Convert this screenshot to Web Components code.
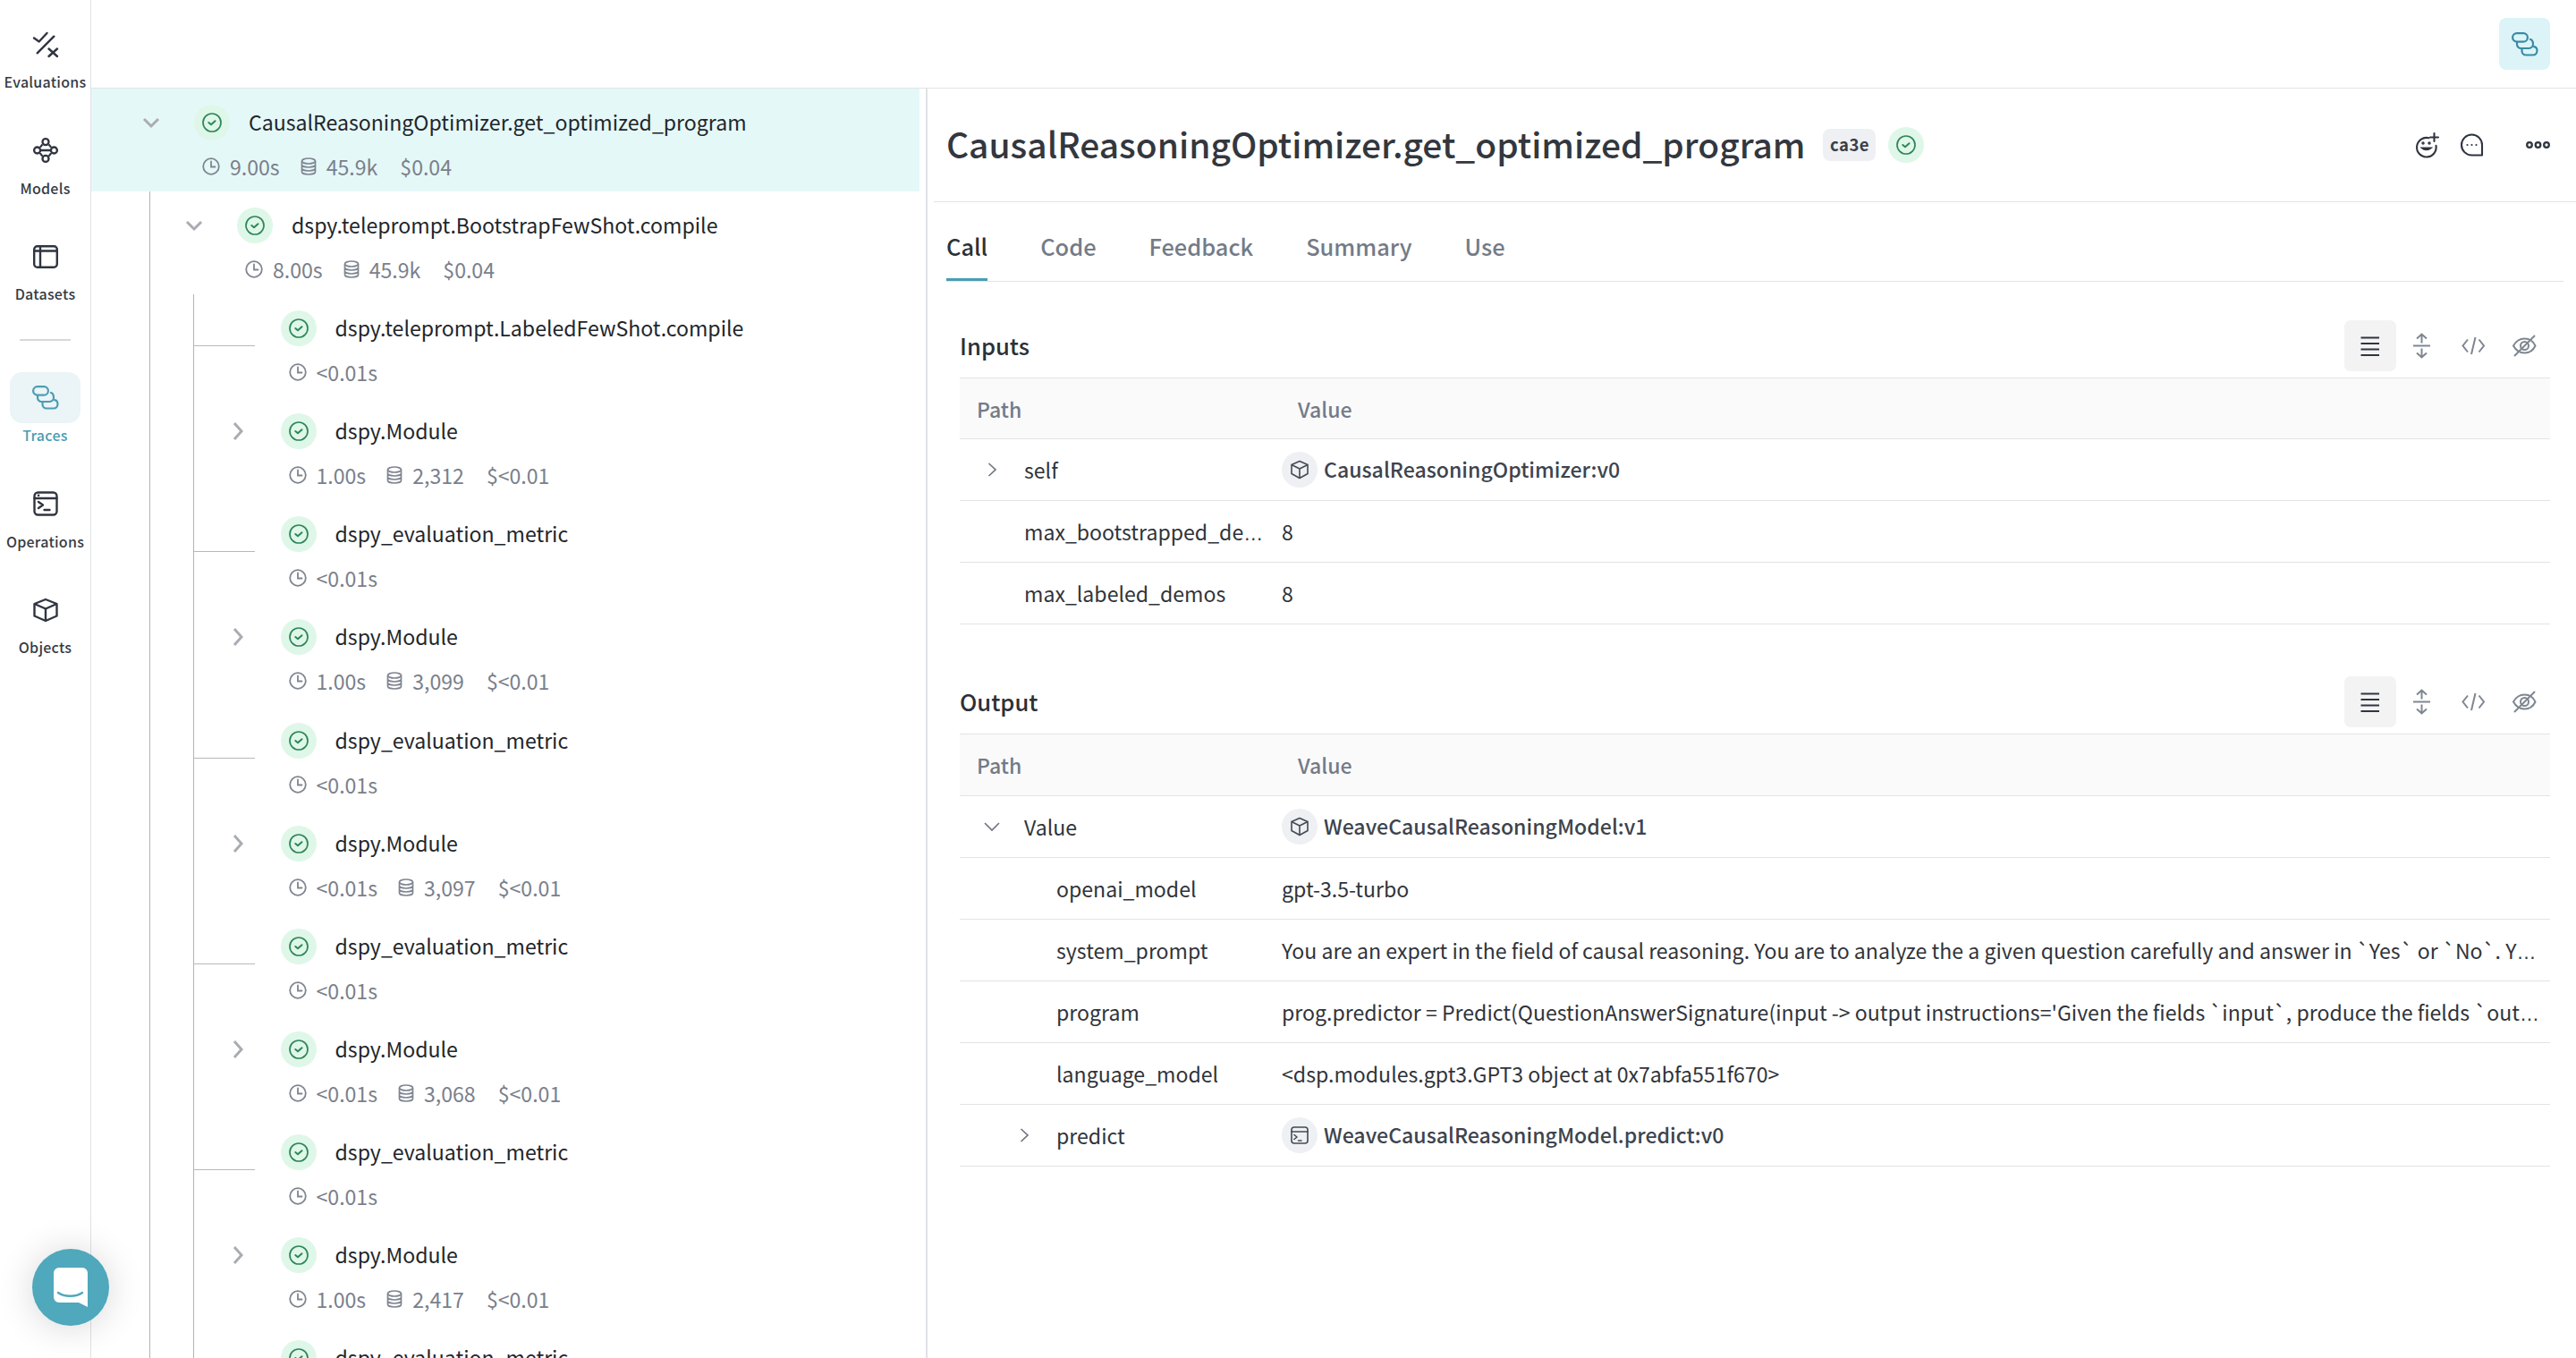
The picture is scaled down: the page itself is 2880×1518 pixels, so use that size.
<!DOCTYPE html>
<html lang="en"><head><meta charset="utf-8"><title>Traces</title>
<style>
html,body{margin:0;padding:0;height:1518px;overflow:hidden;background:#fff;font-family:"Noto Sans CJK SC","Source Sans Pro","Noto Sans",sans-serif;color:#1f2328}
</style></head><body>
<wv-app></wv-app>
<script>
const ICONS={
 evals:'<g fill="none" stroke-linecap="round" stroke-linejoin="round" stroke-width="2.4"><path d="M1 6.5 6.7 10.5 15.5 1"/><path d="M4.7 23.3 23.3 4.7"/><path d="M17.5 18.5 27 27M27 18.5 17.5 27"/></g>',
 models:'<g fill="none" stroke-width="2.3"><circle cx="14" cy="4.6" r="3.5"/><circle cx="14" cy="23.4" r="3.5"/><circle cx="4.6" cy="14" r="3.5"/><circle cx="23.4" cy="14" r="3.5"/><path d="M8 14h12M10.5 7.5C9 9 8 10 8 11M17.5 7.5C19 9 20 10 20 11M10.5 20.5C9 19 8 18 8 17M17.5 20.5C19 19 20 18 20 17"/></g>',
 datasets:'<g fill="none" stroke-width="2.4"><rect x="1.2" y="2.2" width="25.6" height="23.6" rx="3.5"/><path d="M1.2 7.5h25.6M8 2.2v23.6"/></g>',
 traces:'<g fill="none" stroke-width="2.2" stroke-linecap="round"><rect x="1.1" y="1.1" width="16.8" height="9.6" rx="4.8"/><path d="M6 11.5v2a4.500 4.500 0 0 0 4.500 4.500h9a4.700 4.700 0 0 0 4.500-4.700c0-2.500-1.500-4.800-3-5.300"/><path d="M11.500 18.500v2.500a4.500 4.500 0 0 0 4.500 4.500h8a4.700 4.700 0 0 0 4.500-4.500c0-2.500-1.500-4.500-3.500-4.800"/></g>',
 ops:'<g fill="none" stroke-width="2.4" stroke-linecap="round" stroke-linejoin="round"><rect x="1.5" y="1.500" width="25" height="25" rx="4"/><path d="M1.5 8h25"/><path d="M6 12l5 3.500-5 3.500M12.500 21h6"/><path d="M6 4.800h.2"/></g>',
 cube:'<g fill="none" stroke-width="2.400" stroke-linejoin="round"><path d="M14 2 26.500 7v13.500L14 26 1.500 20.500V7Z"/><path d="M1.500 7 14 12.500 26.500 7M14 12.500V26"/></g>',
 check:'<g fill="none"><circle cx="11" cy="11" r="10" stroke-width="1.700"/><path d="M7.300 11 10 13.200 14.500 9.200" stroke-width="2" stroke-linecap="round" stroke-linejoin="round"/></g>',
 clock:'<g fill="none" stroke-width="1.800" stroke-linecap="round"><circle cx="10" cy="10" r="8.800"/><path d="M10 4.500V10.500H14.500"/></g>',
 db:'<g fill="none" stroke-width="1.700"><ellipse cx="9" cy="4" rx="7.500" ry="3"/><path d="M1.500 4v12c0 1.700 3.400 3 7.500 3s7.500-1.300 7.500-3V4M1.500 8c0 1.700 3.400 3 7.500 3s7.500-1.300 7.500-3M1.500 12c0 1.700 3.400 3 7.500 3s7.500-1.300 7.500-3"/></g>',
 down:'<path d="M2 2 10 10 18 2" fill="none" stroke-width="3"/>',
 right:'<path d="M2 1 10 10 2 19" fill="none" stroke-width="3"/>',
 thinright:'<path d="M1.500 1 9 8 1.500 15" fill="none" stroke-width="1.700"/>',
 thindown:'<path d="M1 1 9 9 17 1" fill="none" stroke-width="1.700"/>',
 smile:'<g fill="none" stroke-width="2.100" stroke-linecap="round"><path d="M15.500 5.200A10.800 10.800 0 1 0 23.500 13.800"/><path d="M21.500 0v9M17 4.500h9"/><path d="M8 16.500c2.500 2.300 7 2.300 9.500 0Z" fill="#2f3540"/><circle cx="9" cy="11" r=".7" fill="#2f3540"/><circle cx="16" cy="11" r=".7" fill="#2f3540"/></g>',
 comment:'<g fill="none" stroke-width="2.100" stroke-linejoin="round"><path d="M25 13A11.500 11.500 0 1 0 13.500 24.500H25Z"/></g><circle cx="8.500" cy="13" r="1.100" stroke="none"/><circle cx="13.500" cy="13" r="1.100" stroke="none"/><circle cx="18.500" cy="13" r="1.100" stroke="none"/>',
 dots:'<g fill="none" stroke-width="2.300"><circle cx="4" cy="4" r="2.800"/><circle cx="13.500" cy="4" r="2.800"/><circle cx="23" cy="4" r="2.800"/></g>',
 lines:'<path d="M.5 1.500h20.500M.5 8h20.500M.5 14.500h20.500M.5 21h20.500" fill="none" stroke-width="2.200"/>',
 expand:'<g fill="none" stroke-width="2"><path d="M0 14.500h19"/><path d="M9.500 11.500V1.500M4 6.500 9.500 1.500 15 6.500M9.500 17.500V27.500M4 22.500 9.500 27.500 15 22.500"/></g>',
 code:'<path d="M7 3.500 1.500 10.500 7 17.500M19.500 3.500 25 10.500 19.500 17.500M15.500 1 11 20" fill="none" stroke-width="2"/>',
 eyeoff:'<g fill="none" stroke-width="2"><path d="M1 12.500C4 7 8.500 4.500 13.500 4.500s9.500 2.500 12 8c-2.500 5.500-7 8-12 8S4 18 1 12.500Z"/><circle cx="13.500" cy="12.500" r="4.500"/><path d="M2 24 25 1"/></g>',
 box:'<g fill="none" stroke-width="1.600" stroke-linejoin="round"><path d="M11 1.500 20 5.500v10L11 20.500 2 15.500v-10Z"/><path d="M2 5.500 11 10l9-4.500M11 10v10.500"/></g>',
 term:'<g fill="none" stroke-width="1.600" stroke-linecap="round" stroke-linejoin="round"><rect x="2" y="2" width="18" height="18" rx="3"/><path d="M2 7h18M5 10.500l3 2.500-3 2.500M9.500 17h3.500"/></g>'
};
const VB={evals:[28,28],models:[28,28],datasets:[28,28],traces:[29,26],ops:[28,28],cube:[28,28],check:[22,22],clock:[20,20],db:[18,20],down:[20,12],right:[12,20],thinright:[10,16],thindown:[18,10],smile:[26,26],comment:[26,26],dots:[27,8],lines:[21,22],expand:[19,29],code:[26,21],eyeoff:[27,25],box:[22,22],term:[22,22]};
class WvIcon extends HTMLElement{
 connectedCallback(){
  if(this.shadowRoot)return;
  const n=this.getAttribute('name'),[w,h]=VB[n],c=this.getAttribute('color')||'currentColor';
  this.attachShadow({mode:'open'}).innerHTML=`<style>:host{display:inline-flex;flex:none;line-height:0}svg{display:block;overflow:visible}</style><svg width="${w}" height="${h}" viewBox="0 0 ${w} ${h}" stroke="${c}" fill="${c}">${ICONS[n]}</svg>`;
 }
}
customElements.define('wv-icon',WvIcon);

class WvNavItem extends HTMLElement{
 constructor(){super();this.attachShadow({mode:'open'}).innerHTML=`<style>
 :host{display:flex;flex-direction:column;align-items:center;height:118.67px;color:#363b45}
 .pill{width:79px;height:57px;border-radius:14px;display:flex;align-items:center;justify-content:center;box-sizing:border-box}
 :host([active]) .pill{background:#ebf4f6}
 :host([active]){color:#4a9db3}
 .l{font-size:16px;line-height:24px;font-weight:500;margin-top:1px;letter-spacing:.25px;white-space:nowrap}
 </style><div class="pill"><slot name="icon"></slot></div><div class="l"><slot></slot></div>`;}
}
customElements.define('wv-nav-item',WvNavItem);

class WvSidebar extends HTMLElement{
 constructor(){super();this.attachShadow({mode:'open'}).innerHTML=`<style>
 :host{display:block;width:101px;flex:none;border-right:1px solid #dfe2e6;padding-top:21px;box-sizing:content-box;height:1497px;background:#fff}
 hr{border:0;height:2px;background:#d6d8db;width:57px;margin:2px auto 35px}
 </style>
 <wv-nav-item><wv-icon slot="icon" name="evals" color="#2f3540"></wv-icon>Evaluations</wv-nav-item>
 <wv-nav-item><wv-icon slot="icon" name="models" color="#2f3540"></wv-icon>Models</wv-nav-item>
 <wv-nav-item><wv-icon slot="icon" name="datasets" color="#2f3540"></wv-icon>Datasets</wv-nav-item>
 <hr>
 <wv-nav-item active><wv-icon slot="icon" name="traces" color="#4a9db3"></wv-icon>Traces</wv-nav-item>
 <wv-nav-item><wv-icon slot="icon" name="ops" color="#2f3540"></wv-icon>Operations</wv-nav-item>
 <wv-nav-item><wv-icon slot="icon" name="cube" color="#2f3540"></wv-icon>Objects</wv-nav-item>`;}
}
customElements.define('wv-sidebar',WvSidebar);

class WvTopbar extends HTMLElement{
 constructor(){super();this.attachShadow({mode:'open'}).innerHTML=`<style>
 :host{display:flex;justify-content:flex-end;align-items:center;height:98px;padding-right:29px;border-bottom:1px solid #e2e3e6;flex:none}
 .b{width:57px;height:58px;border-radius:8px;background:#dcf4f8;display:flex;align-items:center;justify-content:center}
 </style><div class="b"><wv-icon name="traces" color="#3a8aa3"></wv-icon></div>`;}
}
customElements.define('wv-topbar',WvTopbar);

class WvStatus extends HTMLElement{
 constructor(){super();this.attachShadow({mode:'open'}).innerHTML=`<style>
 :host{display:flex;flex:none;width:40px;height:40px;border-radius:50%;background:#dff7e8;align-items:center;justify-content:center}
 </style><wv-icon name="check" color="#2e8558"></wv-icon>`;}
}
customElements.define('wv-status',WvStatus);

class WvTreeRow extends HTMLElement{
 constructor(){super();this.attachShadow({mode:'open'}).innerHTML=`<style>
 :host{display:block;height:115.1px;box-sizing:border-box;padding-top:18px;position:relative;white-space:nowrap}
 :host([selected]){background:#e5f8f8;margin-right:7px}
 .top{display:flex;align-items:center;height:40px}
 .chev{width:48px;height:40px;margin-right:24px;display:flex;align-items:center;justify-content:center;flex:none;color:#a9adb3}
 .name{margin-left:21px;font-size:23.1px;line-height:38px;height:40px;color:#22262b}
 .meta{display:flex;align-items:center;height:26px;margin-top:16px;font-size:23.1px;line-height:26px;color:#7a808b}
 .meta span{margin-left:11px}
 .tok{display:flex;align-items:center;margin-left:23px}
 .cost{margin-left:25px!important}
 .conn{position:absolute;left:-1px;top:57px;width:69px;height:1px;background:#b5b8bd}
 </style>
 <div class="top"><div class="chev"></div><wv-status></wv-status><div class="name"><slot></slot></div></div>
 <div class="meta"></div>`;}
 connectedCallback(){
  const s=this.shadowRoot,c=this.getAttribute('chev'),t=this.getAttribute('time'),k=this.getAttribute('tok'),d=this.getAttribute('cost');
  s.querySelector('.top').style.paddingLeft=this.getAttribute('pad')+'px';
  s.querySelector('.meta').style.marginLeft=(+this.getAttribute('pad')+72+9)+'px';
  if(c)s.querySelector('.chev').innerHTML=`<wv-icon name="${c}" color="#a9adb3"></wv-icon>`;
  let h=`<wv-icon name="clock" color="#7f8591"></wv-icon><span>${t.replace('<','&lt;')}</span>`;
  if(k)h+=`<div class="tok"><wv-icon name="db" color="#7f8591"></wv-icon><span>${k}</span></div><span class="cost">${d.replace('<','&lt;')}</span>`;
  s.querySelector('.meta').innerHTML=h;
  if(this.hasAttribute('leaf')){const e=document.createElement('div');e.className='conn';s.appendChild(e);}
 }
}
customElements.define('wv-tree-row',WvTreeRow);

class WvTreeGroup extends HTMLElement{
 constructor(){super();this.attachShadow({mode:'open'}).innerHTML=`<style>
 :host{display:block;border-left:1px solid #b0b3b8}
 </style><slot></slot>`;}
}
customElements.define('wv-tree-group',WvTreeGroup);

class WvTree extends HTMLElement{
 constructor(){super();
  const kids=[['dspy.Module','1.00s','2,312','$<0.01'],['dspy.Module','1.00s','3,099','$<0.01'],['dspy.Module','<0.01s','3,097','$<0.01'],['dspy.Module','<0.01s','3,068','$<0.01'],['dspy.Module','1.00s','2,417','$<0.01']];
  let rows=`<wv-tree-row pad="24.5" leaf time="&lt;0.01s">dspy.teleprompt.LabeledFewShot.compile</wv-tree-row>`;
  kids.forEach(([n,t,k,c])=>{
   rows+=`<wv-tree-row pad="24.5" chev="right" time="${t.replace('<','&lt;')}" tok="${k}" cost="${c.replace('<','&lt;')}">${n}</wv-tree-row><wv-tree-row pad="24.5" leaf time="&lt;0.01s">dspy_evaluation_metric</wv-tree-row>`;
  });
  this.attachShadow({mode:'open'}).innerHTML=`<style>
 :host{display:block;width:933px;flex:none;height:1419px;overflow:hidden;border-right:2px solid #dfe2e6;box-sizing:content-box}
 .g1{margin-left:65px}.g2{margin-left:48px}
 </style>
 <wv-tree-row selected pad="43" chev="down" time="9.00s" tok="45.9k" cost="$0.04">CausalReasoningOptimizer.get_optimized_program</wv-tree-row>
 <wv-tree-group class="g1">
  <wv-tree-row pad="25" chev="down" time="8.00s" tok="45.9k" cost="$0.04">dspy.teleprompt.BootstrapFewShot.compile</wv-tree-row>
  <wv-tree-group class="g2">${rows}</wv-tree-group>
 </wv-tree-group>`;}
}
customElements.define('wv-tree',WvTree);

class WvTabs extends HTMLElement{
 constructor(){super();this.attachShadow({mode:'open'}).innerHTML=`<style>
 :host{display:flex;gap:59px;height:88px;margin:0 14px 0 14px;border-bottom:1px solid #e2e3e6;box-sizing:content-box;font-size:25.4px;font-weight:500}
 div{height:88px;color:#747b87;box-sizing:border-box;line-height:99px}
 .on{color:#2c3037;border-bottom:3px solid #4a9db3;margin-bottom:-1px}
 </style>
 <div class="on">Call</div><div>Code</div><div>Feedback</div><div>Summary</div><div>Use</div>`;}
}
customElements.define('wv-tabs',WvTabs);

class WvToolbar extends HTMLElement{
 constructor(){super();this.attachShadow({mode:'open'}).innerHTML=`<style>
 :host{display:flex;flex:none}
 .b{width:57.5px;height:57px;display:flex;align-items:center;justify-content:center;border-radius:7px;color:#7f8691}
 .on{background:#f3f3f4;color:#2f3540}
 </style>
 <div class="b on"><wv-icon name="lines"></wv-icon></div><div class="b"><wv-icon name="expand"></wv-icon></div><div class="b"><wv-icon name="code"></wv-icon></div><div class="b"><wv-icon name="eyeoff"></wv-icon></div>`;}
}
customElements.define('wv-toolbar',WvToolbar);

class WvChip extends HTMLElement{
 connectedCallback(){
  if(this.shadowRoot)return;
  this.attachShadow({mode:'open'}).innerHTML=`<style>
 :host{display:flex;align-items:center;min-width:0;font-weight:500;color:#3d444e}
 .c{width:40px;height:40px;border-radius:50%;background:#eef0f3;display:flex;align-items:center;justify-content:center;margin-right:7px;flex:none}
 .s{position:relative;top:-1px}
 </style><div class="c"><wv-icon color="#444b55" name="${this.getAttribute('icon')}"></wv-icon></div><div class="s"><slot></slot></div>`;
 }
}
customElements.define('wv-chip',WvChip);

class WvEll extends HTMLElement{
 constructor(){super();this.attachShadow({mode:'open'}).innerHTML=`<style>:host{font-family:"Liberation Sans","Noto Sans",sans-serif;letter-spacing:1px;font-size:.95em}</style>…`;}
}
customElements.define('wv-ell',WvEll);

class WvKvRow extends HTMLElement{
 constructor(){super();this.attachShadow({mode:'open'}).innerHTML=`<style>
 :host{display:grid;grid-template-columns:360px minmax(0,1fr);height:69px;box-sizing:border-box;border-bottom:1px solid #e2e3e6;font-size:23.1px;align-items:center;color:#30343a}
 .k{display:flex;align-items:center;min-width:0}
 .ch{width:36px;margin-right:18px;display:flex;justify-content:center;flex:none;height:20px;align-items:center}
 .t{white-space:nowrap}
 .v{min-width:0;white-space:nowrap}
 </style><div class="k"><div class="ch"></div><div class="t"><slot name="key"></slot></div></div><div class="v"><slot></slot></div>`;}
 connectedCallback(){
  const s=this.shadowRoot,d=+(this.getAttribute('depth')||0),c=this.getAttribute('chev');
  s.querySelector('.k').style.paddingLeft=(18+36*d)+'px';
  if(this.hasAttribute('key'))s.querySelector('.t').textContent=this.getAttribute('key');
  if(c)s.querySelector('.ch').innerHTML=`<wv-icon name="${c}" color="#6f7682"></wv-icon>`;
 }
}
customElements.define('wv-kv-row',WvKvRow);

class WvSection extends HTMLElement{
 constructor(){super();this.attachShadow({mode:'open'}).innerHTML=`<style>
 :host{display:block;margin:0 29px 0 36px}
 .h{display:flex;align-items:center;justify-content:space-between;height:57px;margin-bottom:7px}
 .h b{font-size:25.6px;font-weight:500;color:#2c3037;position:relative;top:-1px}
 .th{display:grid;grid-template-columns:360px 1fr;height:67px;background:#fafafa;border-top:1px solid #e2e3e6;border-bottom:1px solid #e2e3e6;align-items:center;font-size:23.1px;font-weight:500;color:#747b87;box-sizing:content-box}
 :host([title="Output"]) .th{height:68px}
 .th div{padding-left:19px}.th div+div{padding-left:18px}
 </style><div class="h"><b></b><wv-toolbar></wv-toolbar></div><div class="th"><div>Path</div><div>Value</div></div><slot></slot>`;}
 connectedCallback(){this.shadowRoot.querySelector('b').textContent=this.getAttribute('title');}
}
customElements.define('wv-section',WvSection);

class WvDetail extends HTMLElement{
 constructor(){super();this.attachShadow({mode:'open'}).innerHTML=`<style>
 :host{display:block;flex:1;min-width:0}
 .hd{display:flex;align-items:center;height:126px;margin-left:7px;padding-left:14px;border-bottom:1px solid #e2e3e6}
 h1{margin:0;font-size:38.9px;line-height:56px;height:60px;font-weight:500;color:#33373e;white-space:nowrap}
 .tag{margin-left:20px;width:59px;height:36px;border-radius:8px;background:#eef0f3;font-size:18.5px;line-height:35px;font-weight:700;text-align:center;color:#3a3f48;letter-spacing:.5px}
 wv-status{margin-left:14px}
 .sp{flex:1}
 .a{display:flex;align-items:center;color:#2f3540;margin-right:29px}
 .a wv-icon:nth-child(1){margin-right:24px}.a wv-icon:nth-child(2){margin-right:48px}
 .body{padding-top:43px}
 wv-section+wv-section{margin-top:58px}
 </style>
 <div class="hd"><h1>CausalReasoningOptimizer.get_optimized_program</h1><div class="tag">ca3e</div><wv-status></wv-status><div class="sp"></div><div class="a"><wv-icon name="smile"></wv-icon><wv-icon name="comment"></wv-icon><wv-icon name="dots"></wv-icon></div></div>
 <div style="margin-left:7px"><wv-tabs></wv-tabs></div>
 <div class="body">
 <wv-section title="Inputs">
  <wv-kv-row key="self" chev="thinright"><wv-chip icon="box">CausalReasoningOptimizer:v0</wv-chip></wv-kv-row>
  <wv-kv-row><span slot="key">max_bootstrapped_de<wv-ell></wv-ell></span>8</wv-kv-row>
  <wv-kv-row key="max_labeled_demos">8</wv-kv-row>
 </wv-section>
 <wv-section title="Output">
  <wv-kv-row key="Value" chev="thindown"><wv-chip icon="box">WeaveCausalReasoningModel:v1</wv-chip></wv-kv-row>
  <wv-kv-row key="openai_model" depth="1">gpt-3.5-turbo</wv-kv-row>
  <wv-kv-row key="system_prompt" depth="1">You are an expert in the field of causal reasoning. You are to analyze the a given question carefully and answer in \`Yes\` or \`No\`. Y<wv-ell></wv-ell></wv-kv-row>
  <wv-kv-row key="program" depth="1">prog.predictor = Predict(QuestionAnswerSignature(input -&gt; output instructions='Given the fields \`input\`, produce the fields \`out<wv-ell></wv-ell></wv-kv-row>
  <wv-kv-row key="language_model" depth="1">&lt;dsp.modules.gpt3.GPT3 object at 0x7abfa551f670&gt;</wv-kv-row>
  <wv-kv-row key="predict" depth="1" chev="thinright"><wv-chip icon="term">WeaveCausalReasoningModel.predict:v0</wv-chip></wv-kv-row>
 </wv-section>
 </div>`;}
}
customElements.define('wv-detail',WvDetail);

class WvBubble extends HTMLElement{
 constructor(){super();this.attachShadow({mode:'open'}).innerHTML=`<style>
 :host{position:fixed;left:36px;top:1396px;width:86px;height:86px;border-radius:50%;background:#4fa8bb;box-shadow:0 2px 40px rgba(0,0,0,.16);display:flex;align-items:center;justify-content:center;z-index:5}
 </style><svg width="38" height="44" viewBox="0 0 38 44"><path d="M6 0H32a6 6 0 0 1 6 6V44L28 39H6a6 6 0 0 1-6-6V6A6 6 0 0 1 6 0Z" fill="#fff"/><path d="M5 28c7 5 20 5 27 0" fill="none" stroke="#4fa8bb" stroke-width="2.500" stroke-linecap="round"/></svg>`;}
}
customElements.define('wv-bubble',WvBubble);

class WvApp extends HTMLElement{
 constructor(){super();this.attachShadow({mode:'open'}).innerHTML=`<style>
 :host{display:flex;height:1518px;overflow:hidden;font-family:"Noto Sans CJK SC","Noto Sans",sans-serif}
 .m{flex:1;min-width:0;display:flex;flex-direction:column}
 .c{display:flex;flex:1;min-height:0}
 </style><wv-sidebar></wv-sidebar><div class="m"><wv-topbar></wv-topbar><div class="c"><wv-tree></wv-tree><wv-detail></wv-detail></div></div><wv-bubble></wv-bubble>`;}
}
customElements.define('wv-app',WvApp);
</script></body></html>
